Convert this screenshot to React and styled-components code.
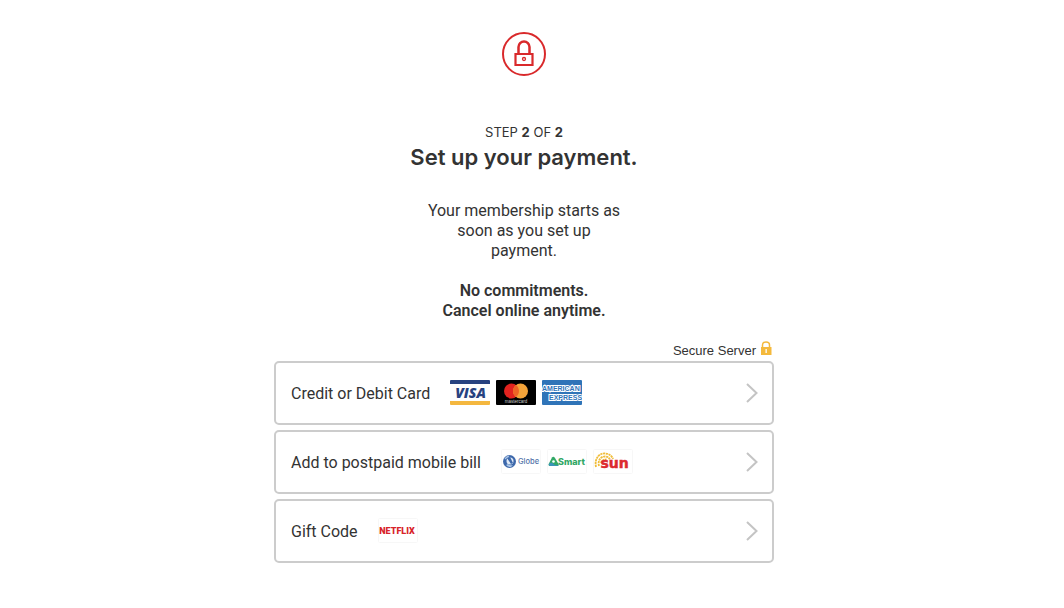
import {createGlobalStyle, styled} from 'styled-components'

const GlobalStyle = createGlobalStyle`
  * {
    box-sizing: border-box;
  }

  body {
    margin: 0;
    background: #fff;
    color: #333;
    font-family: Roboto, Inter, sans-serif;
    font-size: 16px;
    line-height: 20px;
  }
`

const Page = styled.main`
  padding: 32px 16px 32px 0;
`

const Container = styled.div`
  max-width: 500px;
  margin: 0 auto;
`

const Header = styled.header`
  display: flex;
  flex-direction: column;
  align-items: center;
  text-align: center;
`

const LockCircle = styled.svg`
  width: 44px;
  height: 44px;
  margin-bottom: 46px;
`

const Step = styled.p`
  margin: 0;
  font-family: Inter, sans-serif;
  font-size: 13px;
  line-height: 20px;
`

const Title = styled.h1`
  margin: 0 0 29px;
  font-family: Inter, sans-serif;
  font-size: 22px;
  font-weight: 600;
  line-height: 30px;
`

const Text = styled.p`
  max-width: ${({$wide}) => ($wide ? '300px' : '200px')};
  margin: 0 0 20px;
  font-weight: ${({$wide}) => ($wide ? 600 : 400)};
`

const Secure = styled.div`
  display: flex;
  justify-content: flex-end;
  align-items: flex-end;
  gap: 4px;
  padding-right: 2px;
  margin-bottom: 2px;
  font-family: 'Liberation Sans', Arial, sans-serif;
  font-size: 13px;
  line-height: 16px;
`

const SecureIcon = styled.svg`
  width: 12px;
  height: 16px;
  margin-bottom: 2px;
`

const Options = styled.nav`
  display: flex;
  flex-direction: column;
  gap: 5px;
`

const Option = styled.a`
  display: flex;
  align-items: center;
  min-height: 64px;
  padding: 0 14px 0 15px;
  border: 2px solid #ccc;
  border-radius: 5px;
  color: inherit;
  text-decoration: none;
`

const Label = styled.span`
  padding-top: 2px;
`

const Logos = styled.span`
  display: flex;
  gap: 6px;
  margin-left: 20px;
`

const Logo = styled.svg`
  display: block;
  width: 40px;
  height: 25px;
  margin-bottom: 2px;
`

const Arrow = styled.svg`
  width: 12px;
  height: 20px;
  margin-left: auto;
`

const Frame = () => <rect x="0.5" y="0.5" width="39" height="24" rx="1" fill="#fff" stroke="#f7f7f7" />

const Visa = () => (
  <Logo viewBox="0 0 40 25" role="img" aria-label="Visa">
    <rect width="40" height="25" rx="1" fill="#fdfdfd" />
    <path d="M0 4V1a1 1 0 0 1 1-1h38a1 1 0 0 1 1 1v3z" fill="#26417f" />
    <path d="M0 21h40v3a1 1 0 0 1-1 1H1a1 1 0 0 1-1-1z" fill="#f4b73f" />
    <text x="20.5" y="17.5" textAnchor="middle" fontFamily="Open Sans, sans-serif" fontSize="14" fontWeight="800" fontStyle="italic" fill="#26417f">VISA</text>
  </Logo>
)

const Mastercard = () => (
  <Logo viewBox="0 0 40 25" role="img" aria-label="Mastercard">
    <rect width="40" height="25" rx="1" fill="#000" />
    <circle cx="15.5" cy="11" r="7.5" fill="#e2231f" />
    <circle cx="24.5" cy="11" r="7.5" fill="#f3a33a" />
    <path d="M20 5a7.5 7.5 0 0 1 0 12a7.5 7.5 0 0 1 0-12z" fill="#ee6425" />
    <text x="20" y="22.5" textAnchor="middle" fontFamily="Liberation Sans, sans-serif" fontSize="4.5" fill="#ccc">mastercard</text>
  </Logo>
)

const Amex = () => (
  <Logo viewBox="0 0 40 25" role="img" aria-label="American Express">
    <rect width="40" height="25" rx="1" fill="#2f74b8" />
    <g fontFamily="Liberation Sans, sans-serif" fontSize="7" fontWeight="700" fill="#2f74b8" stroke="#fff" strokeWidth="2" paintOrder="stroke">
      <text x="0" y="11">AMERICAN</text>
      <text x="7" y="20">EXPRESS</text>
    </g>
  </Logo>
)

const Globe = () => (
  <Logo viewBox="0 0 40 25" role="img" aria-label="Globe">
    <Frame />
    <circle cx="8.5" cy="12.5" r="6.5" fill="#3d68ab" />
    <circle cx="9" cy="12" r="3.5" fill="#dfe9f6" />
    <path d="M3.5 9.5q2-3 5-3l-1 2q-2 .5-3 2zM5 16l2-1q2 2 5 1l-2 2q-3 .5-5-2z" fill="#a9c4e6" />
    <path d="M6 9l4 6 2-1-3-6z" fill="#3d68ab" />
    <text x="17" y="15" fontFamily="Inter, sans-serif" fontSize="7.5" fontWeight="500" fill="#5374aa">Globe</text>
  </Logo>
)

const Smart = () => (
  <Logo viewBox="0 0 40 25" role="img" aria-label="Smart">
    <Frame />
    <path d="M5 8.5q1.5-1.5 3 .5l3.5 6q.7 2-1.5 2H3.500q-2.500 0-1.800-2z" fill="#32a866" />
    <path d="M1.700 15q2.500-2.500 5 0t4.800 0q.4 2-1.500 2H3.500q-2 0-1.800-2z" fill="#3a94b8" />
    <circle cx="6.500" cy="12.500" r="1.300" fill="#fff" />
    <text x="11" y="15.5" fontFamily="Inter, sans-serif" fontSize="9" fontWeight="800" fill="#32a866">Smart</text>
  </Logo>
)

const Sun = () => (
  <Logo viewBox="0 0 40 25" role="img" aria-label="Sun">
    <Frame />
    <g fill="none" stroke="#f0bd3a" strokeWidth="1.8" strokeDasharray="2.2 0.6">
      <path d="M3 18C1 9 7 4 12 4.500C16 4.500 19 7 20 10" />
      <path d="M6 17C4.500 11 8 7.500 12 7.500C15 7.500 16.500 9 17 11" />
      <path d="M8 14Q9 10.500 13.500 10.500" />
    </g>
    <text x="7.5" y="19" fontFamily="DejaVu Sans, sans-serif" fontSize="14" fontWeight="700" fill="#dc2a2f" stroke="#dc2a2f" strokeWidth="0.5">sun</text>
  </Logo>
)

const Netflix = () => (
  <Logo viewBox="0 0 40 25" role="img" aria-label="Netflix">
    <Frame />
    <text x="19" y="16" textAnchor="middle" fontFamily="Roboto, sans-serif" fontSize="9" fontWeight="900" fill="#d8232a">NETFLIX</text>
  </Logo>
)

const PaymentOption = ({label, href, children}) => (
  <Option href={href}>
    <Label>{label}</Label>
    <Logos>{children}</Logos>
    <Arrow viewBox="0 0 12 20" fill="none" stroke="#c4c4c4" strokeWidth="2" aria-hidden="true">
      <path d="M1 1l9.500 9L1 19" />
    </Arrow>
  </Option>
)

const App = () => (
  <Page>
    <GlobalStyle />
    <Container>
      <Header>
        <LockCircle viewBox="0 0 44 44" fill="none" stroke="#d9292b" strokeWidth="2" aria-hidden="true">
          <circle cx="22" cy="22" r="21" />
          <path d="M13.500 22h17v11h-17z" strokeWidth="2.200" />
          <path d="M16.500 21v-6a5.500 5.500 0 0 1 11 0v6" strokeWidth="2.500" />
          <circle cx="22" cy="27" r="1.500" strokeWidth="1.300" />
        </LockCircle>
        <Step>STEP <b>2</b> OF <b>2</b></Step>
        <Title>Set up your payment.</Title>
        <Text>Your membership starts as soon as you set up payment.</Text>
        <Text $wide>No commitments.<br />Cancel online anytime.</Text>
      </Header>
      <Secure>
        Secure Server
        <SecureIcon viewBox="0 0 12 16" aria-hidden="true">
          <path d="M2.500 7V4a3.500 3 0 0 1 7 0V7" fill="none" stroke="#f4b93c" strokeWidth="1.500" />
          <path d="M1 6h10.500v8H1z" fill="#f4b93c" />
          <path d="M5.500 8h1.300v4H5.500z" fill="#fff" />
        </SecureIcon>
      </Secure>
      <Options aria-label="Payment methods">
        <PaymentOption label="Credit or Debit Card" href="#card">
          <Visa />
          <Mastercard />
          <Amex />
        </PaymentOption>
        <PaymentOption label="Add to postpaid mobile bill" href="#mobile">
          <Globe />
          <Smart />
          <Sun />
        </PaymentOption>
        <PaymentOption label="Gift Code" href="#gift">
          <Netflix />
        </PaymentOption>
      </Options>
    </Container>
  </Page>
)

export default App
